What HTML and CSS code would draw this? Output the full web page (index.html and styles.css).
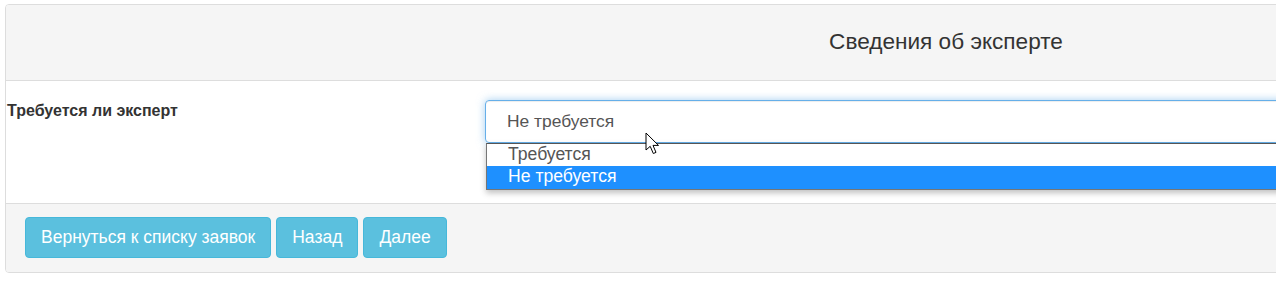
FILE: index.html
```html
<!DOCTYPE html>
<html lang="ru">
<head>
    <meta charset="UTF-8">
    <title>Сведения об эксперте</title>
    <link rel="stylesheet" href="styles.css">
</head>
<body>
    <div class="panel">
        <div class="panel-heading">
            <h3 class="panel-title">Сведения об эксперте</h3>
        </div>
        <div class="panel-body">
            <div class="form-row">
                <label class="field-label">Требуется ли эксперт</label>
                <div class="field">
                    <div class="select-box">Не требуется</div>
                    <ul class="select-list">
                        <li>Требуется</li>
                        <li class="selected">Не требуется</li>
                    </ul>
                    <svg class="cursor" width="15" height="24" viewBox="0 0 15 24">
                        <path d="M1 1 L1 18 L5.2 14.3 L8.3 21.5 L11 20.4 L8 13.4 L13.5 13.4 Z" fill="#fff" stroke="#000" stroke-width="1" stroke-linejoin="miter"/>
                    </svg>
                </div>
            </div>
        </div>
        <div class="panel-footer">
            <button class="btn">Вернуться к списку заявок</button>
            <button class="btn">Назад</button>
            <button class="btn">Далее</button>
        </div>
    </div>
</body>
</html>
```

FILE: styles.css
```css
html, body {
    overflow: hidden;
}
body {
    margin: 0;
    padding: 4px 0 0 5px;
    font-family: "Liberation Sans", Arial, sans-serif;
    font-size: 14px;
    color: #333;
    background-color: #fff;
}
.panel {
    width: 1880px;
    border: 1px solid #ddd;
    border-radius: 4px;
    background-color: #fff;
}
.panel-heading {
    background-color: #f5f5f5;
    border-bottom: 1px solid #ddd;
    border-radius: 3px 3px 0 0;
    padding: 24px 15px 25px;
    text-align: center;
}
.panel-title {
    margin: 0;
    font-size: 22.6px;
    font-weight: normal;
    line-height: 26px;
    color: #333;
}
.panel-body {
    padding: 19px 0 13px;
}
.form-row {
    display: grid;
    grid-template-columns: 479px 1fr;
}
.field-label {
    padding: 0 0 0 1px;
    font-size: 16px;
    font-weight: bold;
    line-height: 22px;
}
.field {
    position: relative;
}
.select-box {
    box-sizing: border-box;
    height: 43px;
    border: 1px solid #66afe9;
    border-radius: 4px;
    padding: 0 21px;
    font-size: 17.4px;
    line-height: 41px;
    color: #555;
    box-shadow: inset 0 1px 1px rgba(0, 0, 0, 0.075), 0 0 8px rgba(102, 175, 233, 0.6);
}
.select-list {
    list-style: none;
    margin: 0 0 0 1px;
    padding: 0;
    border: 1px solid #767676;
    border-top-color: #555;
    background-color: #fff;
    box-shadow: 0 3px 6px rgba(0, 0, 0, 0.25);
    font-size: 17.6px;
}
.select-list li {
    height: 22px;
    line-height: 21px;
    padding: 0 21px;
    color: #555;
}
.select-list li.selected {
    background-color: #1e90ff;
    color: #fff;
    height: 23px;
}
.cursor {
    position: absolute;
    left: 160px;
    top: 32px;
}
.panel-footer {
    background-color: #f5f5f5;
    border-top: 1px solid #ddd;
    border-radius: 0 0 3px 3px;
    padding: 13px 19px 14px;
    display: flex;
    gap: 5px;
}
.btn {
    height: 41px;
    padding: 0 15px;
    background-color: #5bc0de;
    border: 1px solid #46b8da;
    border-radius: 4px;
    color: #fff;
    font-family: "Liberation Sans", Arial, sans-serif;
    font-size: 17.5px;
    cursor: pointer;
}
.btn:hover {
    background-color: #31b0d5;
}
```
